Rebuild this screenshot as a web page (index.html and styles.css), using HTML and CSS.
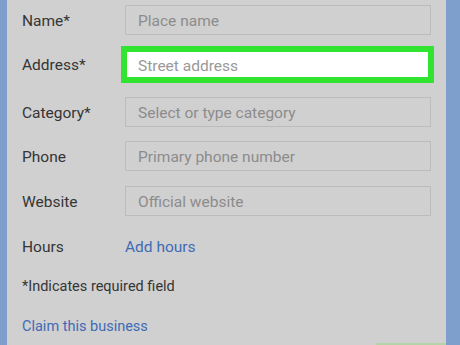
FILE: index.html
```html
<!DOCTYPE html>
<html lang="en">
<head>
  <meta charset="UTF-8">
  <meta name="viewport" content="width=device-width, initial-scale=1.0">
  <title>Add a place</title>
  <link rel="stylesheet" href="styles.css">
</head>
<body>
  <div class="panel">
    <div class="row">
      <span class="label">Name*</span>
      <div class="field">Place name</div>
    </div>

    <div class="row row-address">
      <span class="label">Address*</span>
      <div class="field field-active">Street address</div>
    </div>

    <div class="row row-category">
      <span class="label">Category*</span>
      <div class="field">Select or type category</div>
    </div>

    <div class="row row-phone">
      <span class="label">Phone</span>
      <div class="field">Primary phone number</div>
    </div>

    <div class="row row-website">
      <span class="label">Website</span>
      <div class="field">Official website</div>
    </div>

    <div class="row row-hours">
      <span class="label">Hours</span>
      <a class="link" href="#">Add hours</a>
    </div>

    <p class="note">*Indicates required field</p>

    <a class="link claim" href="#">Claim this business</a>

    <div class="footer">
      <span class="btn"></span>
    </div>
  </div>
</body>
</html>
```

FILE: styles.css
```css
html, body {
  height: 100%;
}
body {
  margin: 0;
  background-color: #7e9ecb;
  font-family: Roboto, "Liberation Sans", sans-serif;
  overflow: hidden;
}
.panel {
  margin: 0 14px 0 7px;
  height: 100%;
  box-sizing: border-box;
  padding: 5px 0 0 15px;
  background-color: #d0d0d0;
}
.row {
  display: flex;
  align-items: center;
  height: 30px;
}
.row-address {
  height: 37px;
  margin-top: 11px;
}
.row-category {
  margin-top: 14px;
}
.row-phone {
  margin-top: 14px;
}
.row-website {
  margin-top: 15px;
}
.row-hours {
  margin-top: 15px;
}
.label {
  width: 103px;
  padding-top: 1px;
  font-size: 15.5px;
  color: #353535;
}
.field {
  box-sizing: border-box;
  width: 306px;
  height: 30px;
  padding: 2px 0 0 12px;
  display: flex;
  align-items: center;
  border: 1px solid #bcbcbc;
  font-size: 15.5px;
  color: #8c8c8c;
}
.field-active {
  width: 313px;
  height: 37px;
  margin-left: -4px;
  padding-left: 11px;
  border: 6px solid #30e430;
  background-color: #fff;
  color: #999;
}
.link {
  padding-top: 1px;
  font-size: 15.5px;
  color: #3f6bb6;
  text-decoration: none;
}
.note {
  margin: 17px 0 0;
  font-size: 14.5px;
  color: #353535;
}
.claim {
  display: block;
  margin-top: 22px;
  font-size: 14.5px;
}
.footer {
  display: flex;
  justify-content: flex-end;
  margin-top: 8px;
}
.btn {
  width: 70px;
  height: 10px;
  background-color: #b4d3a6;
}
```
